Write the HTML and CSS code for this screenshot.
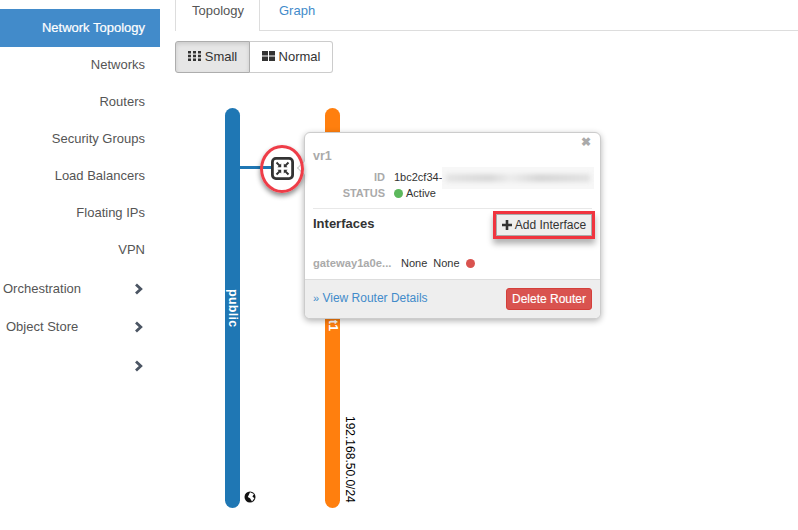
FILE: index.html
```html
<!DOCTYPE html>
<html lang="en">
<head>
<meta charset="utf-8">
<title>Network Topology</title>
<link rel="stylesheet" href="styles.css">
</head>
<body>
<div class="page">
  <nav class="sidebar">
    <a class="nav-item active">Network Topology</a>
    <a class="nav-item">Networks</a>
    <a class="nav-item">Routers</a>
    <a class="nav-item">Security Groups</a>
    <a class="nav-item">Load Balancers</a>
    <a class="nav-item">Floating IPs</a>
    <a class="nav-item">VPN</a>
    <a class="nav-group orch"><span>Orchestration</span><svg class="chev" viewBox="0 0 10 12"><path d="M2 1.5 6.8 6 2 10.5" fill="none" stroke="#4b5563" stroke-width="2.8"/></svg></a>
    <a class="nav-group store"><span>Object Store</span><svg class="chev" viewBox="0 0 10 12"><path d="M2 1.5 6.8 6 2 10.5" fill="none" stroke="#4b5563" stroke-width="2.8"/></svg></a>
    <a class="nav-group last"><span></span><svg class="chev" viewBox="0 0 10 12"><path d="M2 1.5 6.8 6 2 10.5" fill="none" stroke="#4b5563" stroke-width="2.8"/></svg></a>
  </nav>
  <main class="content">
    <div class="tabs">
      <a class="tab current">Topology</a>
      <a class="tab">Graph</a>
    </div>
    <div class="btn-group">
      <button class="size-btn pressed"><svg class="size-icon" viewBox="0 0 13 10"><path d="M0 0h3v2.6H0zM5 0h3v2.6H5zM10 0h3v2.6h-3zM0 3.7h3v2.6H0zM5 3.7h3v2.6H5zM10 3.7h3v2.6h-3zM0 7.4h3V10H0zM5 7.4h3V10H5zM10 7.4h3V10h-3z" fill="#333"/></svg>Small</button>
      <button class="size-btn"><svg class="size-icon" viewBox="0 0 13 10"><path d="M0 0h6v4.5H0zM7 0h6v4.5H7zM0 5.5h6V10H0zM7 5.5h6V10H7z" fill="#333"/></svg>Normal</button>
    </div>
    <div class="canvas">
      <div class="net net-public"><span class="net-name">public</span></div>
      <div class="net net-private"><span class="net-name">int-net1</span></div>
      <span class="cidr">192.168.50.0/24</span>
      <svg class="globe" viewBox="0 0 12 12"><circle cx="6" cy="6" r="5.5" fill="#111"/><path d="M6 1.2 10 3 8.4 5.6 10.4 7.2 8 10.4 6 7.2 3.8 6 5 3.4z" fill="#fff"/></svg>
      <div class="link"></div>
      <div class="router">
        <svg viewBox="0 0 23 23"><rect x="1.4" y="1.4" width="20.2" height="20.2" rx="3.5" fill="#fff" stroke="#333" stroke-width="2.8"/><path d="M5.5 5.5l3.4 3.4M17.5 5.5l-3.4 3.4M5.5 17.5l3.4-3.4M17.5 17.5l-3.4-3.4" stroke="#333" stroke-width="2"/><path d="M10.2 10.2V6.4L6.4 10.2zM12.8 10.2V6.4L16.6 10.2zM10.2 12.8V16.6L6.4 12.8zM12.8 12.8V16.6L16.6 12.8z" fill="#333"/></svg>
      </div>
      <div class="callout-circle"></div>
      <div class="popup">
        <div class="popup-arrow"></div>
        <span class="close">&#10006;</span>
        <div class="popup-body">
          <div class="router-name">vr1</div>
          <dl class="info">
            <dt>ID</dt><dd>1bc2cf34-<span class="blurred"></span></dd>
            <dt>STATUS</dt><dd><span class="dot green"></span>Active</dd>
          </dl>
          <div class="iface-head">
            <span class="iface-title">Interfaces</span>
            <button class="add-btn"><svg class="plus" viewBox="0 0 10 10"><path d="M3.7 0h2.6v3.7H10v2.6H6.3V10H3.7V6.3H0V3.7h3.7z" fill="#333"/></svg>Add Interface</button>
          </div>
          <div class="iface-row">
            <span class="iface-name">gateway1a0e...</span>
            <span>None</span><span>None</span><span class="dot red"></span>
          </div>
        </div>
        <div class="popup-foot">
          <a class="details"><span class="raquo">»</span> View Router Details</a>
          <button class="del-btn">Delete Router</button>
        </div>
      </div>
    </div>
  </main>
</div>
</body>
</html>
```
FILE: styles.css
```css
* { box-sizing: border-box; }
html, body { margin: 0; padding: 0; background: #fff; }
body { font-family: "Liberation Sans", Arial, sans-serif; font-size: 13px; color: #333; width: 798px; height: 530px; overflow: hidden; }
.page { display: flex; height: 530px; }

.sidebar { width: 160px; flex: none; padding-top: 9px; display: flex; flex-direction: column; }
.nav-item { height: 37px; line-height: 36px; text-align: right; padding-right: 15px; color: #555; }
.nav-item.active { height: 38px; line-height: 37px; background: #428bca; color: #fff; -webkit-text-stroke: .2px #fff; }
.nav-group { display: flex; align-items: center; justify-content: space-between; color: #555; height: 38px; padding-right: 16px; }
.nav-group span { position: relative; top: -1px; }
.nav-group.orch { padding-left: 3px; margin-top: 1px; }
.nav-group.store { padding-left: 6px; }
.nav-group.last { padding-left: 6px; margin-top: 1px; }
.chev { width: 10px; height: 12px; }

.content { flex: 1; padding-left: 15px; }
.tabs { display: flex; height: 31px; border-bottom: 1px solid #ddd; }
.tab { height: 31px; padding: 3px 0 0 19px; line-height: 15px; color: #428bca; }
.tab.current { color: #555; background: #fff; border-left: 1px solid #ddd; border-right: 1px solid #ddd; width: 85px; padding-left: 16px; }

.btn-group { display: flex; margin-top: 10px; height: 32px; }
.size-btn { font: inherit; color: #333; background: #fff; border: 1px solid #ccc; padding: 0 0 2px; height: 32px; display: flex; align-items: center; justify-content: center; gap: 4px; margin: 0; }
.size-btn:first-child { width: 75px; border-radius: 3px 0 0 3px; }
.size-btn:last-child { width: 83px; border-left: 0; border-radius: 0 3px 3px 0; }
.size-btn.pressed { background: #e6e6e6; border-color: #adadad; box-shadow: inset 0 2px 4px rgba(0,0,0,.12); }
.size-icon { width: 13px; height: 10px; }

.canvas { position: relative; height: 467px; }
.net { position: absolute; top: 35px; width: 15px; height: 400px; border-radius: 8px; }
.net-public { left: 50px; background: #1f77b4; }
.net-private { left: 150px; background: #ff7f0e; }
.net-name { position: absolute; left: 0; top: 0; width: 15px; height: 400px; writing-mode: vertical-rl; text-align: center; line-height: 14px; letter-spacing: .3px; color: #fff; font-weight: 700; font-size: 12.5px; }
.cidr { position: absolute; left: 168px; top: 343px; writing-mode: vertical-rl; font-size: 12px; line-height: 14px; color: #000; }
.globe { position: absolute; left: 69px; top: 418px; width: 12px; height: 12px; }
.link { position: absolute; left: 65px; top: 93px; width: 32px; height: 3px; background: #1f77b4; }
.router { position: absolute; left: 96px; top: 84px; width: 23px; height: 23px; }
.router svg { display: block; width: 23px; height: 23px; }
.callout-circle { position: absolute; z-index: 1; left: 85px; top: 72px; width: 44px; height: 48px; border: 3px solid #ee3d48; border-radius: 50%; box-shadow: 0 3px 5px rgba(0,0,0,.45); }

.popup { position: absolute; left: 129px; top: 59px; width: 297px; height: 187px; background: #fff; border-radius: 6px; border: 1px solid #ccc; box-shadow: 0 2px 6px rgba(0,0,0,.3); display: flex; flex-direction: column; }
.popup-arrow { position: absolute; left: -6px; top: 30px; width: 10px; height: 10px; background: #fff; transform: rotate(45deg); border-left: 1px solid #ccc; border-bottom: 1px solid #ccc; }
.close { position: absolute; right: 9px; top: 2px; font-size: 12px; line-height: 14px; font-weight: 700; color: #aaa; }
.popup-body { flex: 1; padding: 15px 8px 0 8px; position: relative; }
.router-name { color: #aaa; font-weight: 700; font-size: 12.5px; line-height: 16px; }
.info { display: grid; grid-template-columns: 72px 1fr; grid-template-rows: 15px 16px; column-gap: 9px; margin: 6px 0 0; font-size: 11px; line-height: 15px; }
.info dt { text-align: right; color: #aaa; font-weight: 700; align-self: end; }
.info dd { margin: 0; color: #333; display: flex; align-items: flex-end; }
.info dd:first-of-type { align-items: center; }
.blurred { display: block; position: relative; width: 152px; height: 22px; margin: -4px 0; background: #f7f7f7; }
.blurred::after { content: ""; position: absolute; left: 4px; right: 4px; top: 7px; height: 8px; background: linear-gradient(90deg,#e4e4e4,#d8d8d8 30%,#ececec 45%,#d6d6d6 65%,#e2e2e2); filter: blur(2px); }
.dot { display: inline-block; width: 9px; height: 9px; border-radius: 50%; }
.dot.green { background: #5cb85c; margin: 0 3px 3px 0; }
.dot.red { background: #d9534f; }
.iface-head { margin-top: 7px; border-top: 1px solid #e8e8e8; padding-top: 5px; display: flex; align-items: flex-start; justify-content: space-between; height: 36px; }
.iface-title { font-weight: 700; line-height: 18px; color: #333; margin-top: 1px; }
.add-btn { font: inherit; font-size: 12px; color: #333; background: #eee; border: 1px solid #aaa; border-radius: 0; height: 22px; width: 96px; padding: 0; display: flex; align-items: center; justify-content: center; gap: 3px; box-shadow: 0 0 0 3px #f0343f, 0 5px 6px 3px rgba(0,0,0,.3); margin-top: 0; }
.plus { width: 10px; height: 10px; }
.iface-row { margin-top: 12px; display: flex; align-items: center; gap: 6px; font-size: 11px; line-height: 14px; color: #333; }
.iface-name { color: #aaa; font-weight: 700; width: 82px; font-size: 11.2px; white-space: nowrap; }
.popup-foot { height: 39px; background: #eee; border-top: 1px solid #ddd; border-radius: 0 0 5px 5px; display: flex; align-items: center; justify-content: space-between; padding: 0 8px; }
.details { color: #428bca; font-size: 12px; margin-bottom: 3px; }
.raquo { font-size: 11px; }
.del-btn { font: inherit; font-size: 12px; color: #fff; background: #d9534f; border: 1px solid #d43f3a; border-radius: 3px; width: 86px; height: 22px; padding: 0; -webkit-text-stroke: .15px #fff; }
```
